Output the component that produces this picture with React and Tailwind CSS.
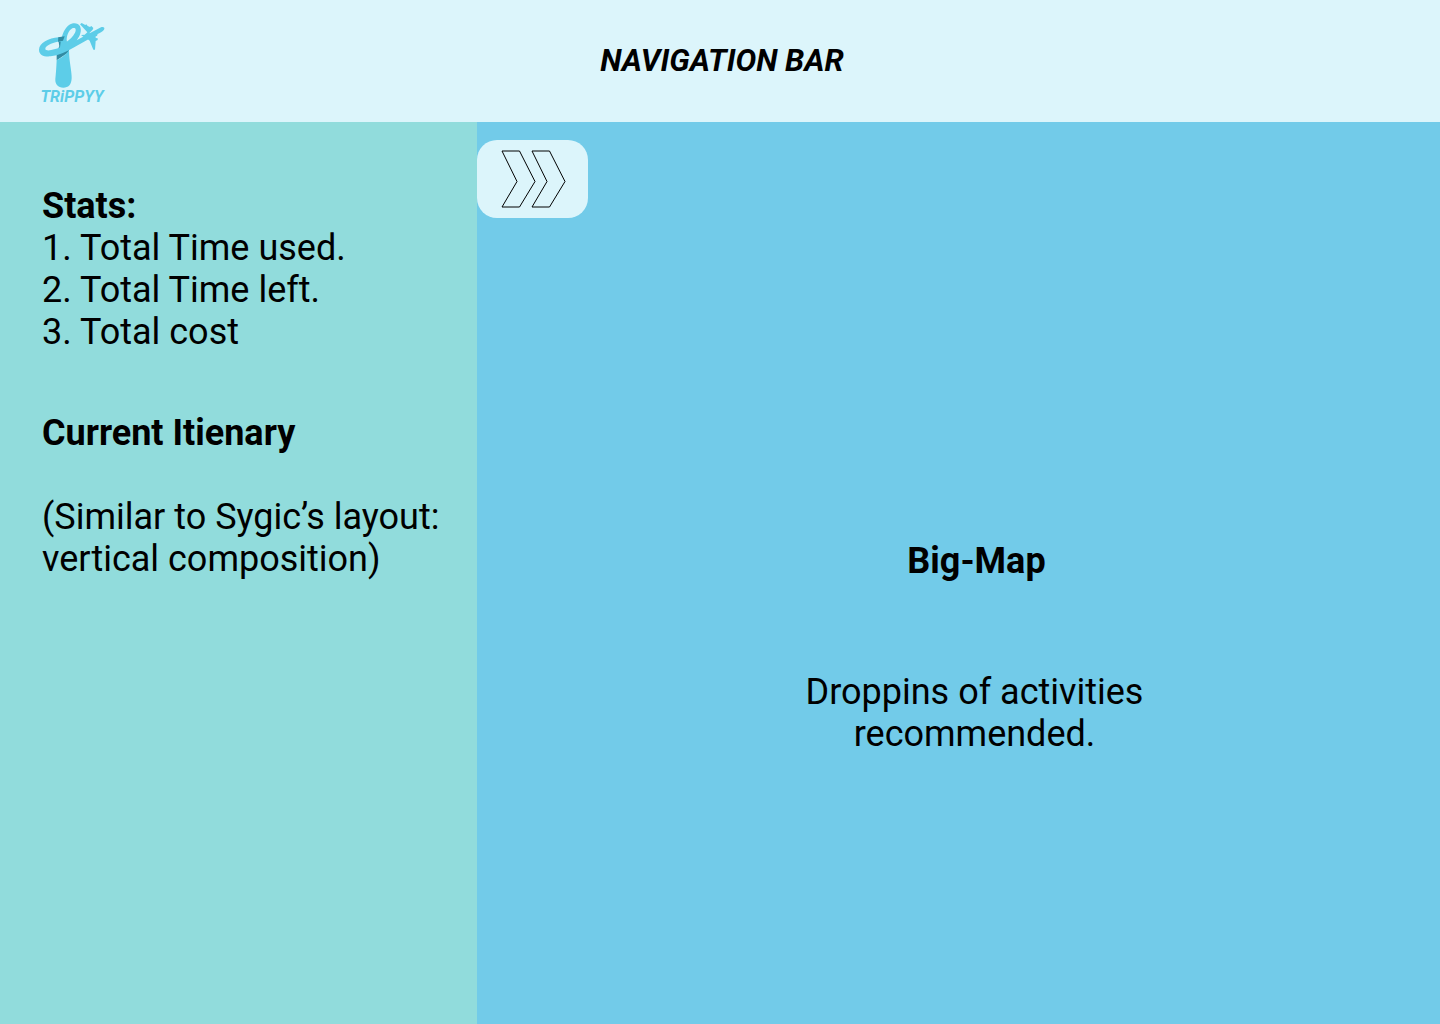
function Logo() {
  return (
    <a href="#" aria-label="Trippyy home" className="flex w-[68px] flex-col items-center pt-[5px] text-[#5dcde8]">
      <svg viewBox="24 21 204 201" className="h-[67px] w-[68px]" fill="none" aria-hidden="true">
        <path d="M84 68L106 64L110 84L118 98L116 112L80 136L80 112L88 94Z" fill="#328ba3" />
        <path d="M80 136C92 130 108 120 117 106C117 140 126 170 125 190C124 210 115 218 100 218C84 218 75 208 76 192C78 174 79 158 80 136Z" fill="currentColor" />
        <path fillRule="evenodd" d="M86 67C56 69 27 84 27 104C27 120 42 126 62 124C86 121 108 111 130 98L186 67L180 54L140 76C151 62 156 47 150 34C145 23 128 22 117 30C105 39 97 56 93 77C72 81 83 79 88 79ZM84 80C64 84 45 92 46 102C48 111 75 104 90 97L92 80ZM110 80C109 62 116 46 127 40C136 36 140 43 135 53C129 65 119 74 110 80Z" fill="currentColor" />
        <path d="M85 67L104 64L99 77L84 80Z" fill="#328ba3" />
        <path d="M176 56L213 37C220 34 226 38 222 44C218 49 212 52 203 57L201 63L197 64L197 69L203 70L203 75L197 78L195 104L190 104L179 77L170 70L162 79L158 76L161 66L153 60L164 59L172 52L150 28L155 24L166 30L169 28L173 33L180 36L184 33L190 39L188 44Z" fill="currentColor" />
      </svg>
      <span className="text-base leading-4 font-bold italic">TRiPPYY</span>
    </a>
  );
}

export default function App() {
  return (
    <div className="flex min-h-screen flex-col font-['Roboto',sans-serif] text-4xl leading-[42px] text-black">
      <header className="grid h-[122px] grid-cols-[1fr_auto_1fr] items-center bg-[#dcf5fb] pr-[34px] pl-[38px]">
        <Logo />
        <h1 className="text-[31px] leading-10 font-bold italic">NAVIGATION BAR</h1>
      </header>
      <div className="flex flex-1">
        <aside className="w-[477px] shrink-0 bg-[#91dcdc] pt-[63px] pr-6 pl-[42px]">
          <section>
            <h2 className="font-bold">Stats:</h2>
            <ol>
              <li>1. Total Time used.</li>
              <li>2. Total Time left.</li>
              <li>3. Total cost</li>
            </ol>
          </section>
          <section className="mt-[59px]">
            <h2 className="font-bold">Current Itienary</h2>
            <p className="mt-[42px]">(Similar to Sygic’s layout: vertical composition)</p>
          </section>
        </aside>
        <main className="flex flex-1 flex-col bg-[#72cbe9] pt-[18px]">
          <button type="button" aria-label="Expand panel" className="flex h-[78px] w-[111px] items-center justify-center rounded-[20px] bg-[#dcf5fb]">
            <svg viewBox="0 0 66 58" className="h-[58px] w-[66px]" fill="none" stroke="black" aria-hidden="true">
              <path d="M2 1H19.5L35 31.5L19.5 57H2L17 31.5Z" />
              <path d="M32 1H49.5L65 31.5L49.5 57H32L47 31.5Z" />
            </svg>
          </button>
          <section className="mt-[322px] flex flex-col items-center pl-8 text-center">
            <h2 className="pl-1 font-bold">Big-Map</h2>
            <p className="mt-[89px] max-w-[360px]">Droppins of activities recommended.</p>
          </section>
        </main>
      </div>
    </div>
  );
}
